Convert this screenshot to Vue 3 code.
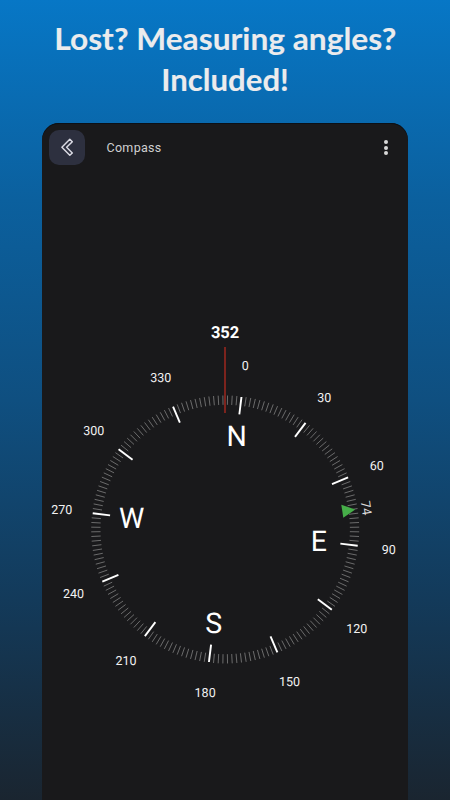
<script setup>
const CX = 183.2
const CY = 406.5
const ROTATION = 7

const polar = (deg, r) => {
  const a = ((deg + ROTATION) * Math.PI) / 180
  return { x: CX + r * Math.sin(a), y: CY - r * Math.cos(a) }
}

const ticks = Array.from({ length: 180 }, (_, i) => {
  const deg = i * 2
  const major = deg % 30 === 0
  const a = polar(deg, major ? 116 : 124.7)
  const b = polar(deg, major ? 133.5 : 134)
  return { deg, major, a, b }
})

const labels = Array.from({ length: 12 }, (_, i) => ({ text: String(i * 30), ...polar(i * 30, 164.7) }))
const letters = ['N', 'E', 'S', 'W'].map((text, i) => ({ text, ...polar(i * 90, 94.3) }))
</script>

<template>
  <main class="page">
    <svg class="headline" viewBox="0 0 450 123" width="450" height="123">
      <text x="54.3" y="50" textLength="342" lengthAdjust="spacingAndGlyphs">Lost? Measuring angles?</text>
      <text x="161.3" y="90.6" textLength="127.5" lengthAdjust="spacingAndGlyphs">Included!</text>
    </svg>
    <section class="phone">
      <header class="bar">
        <button class="back" aria-label="Back">
          <svg viewBox="0 0 36 35" width="36" height="35">
            <path d="M20.8 9.2 L12.9 17.3 L20.8 25.3 L23.3 23 L17.6 17.3 L23.3 11.7 Z" />
          </svg>
        </button>
        <span class="title">Compass</span>
        <span class="menu"><i></i><i></i><i></i></span>
      </header>
      <svg class="dial" viewBox="0 49 366 628" width="366" height="628">
        <line
          v-for="t in ticks" :key="t.deg" :class="t.major ? 'major' : 'minor'"
          :x1="t.a.x" :y1="t.a.y" :x2="t.b.x" :y2="t.b.y"
        />
        <text v-for="l in labels" :key="l.text" class="degree" :x="l.x" :y="l.y + 4.4">{{ l.text }}</text>
        <text v-for="l in letters" :key="l.text" class="letter" :x="l.x" :y="l.y + 10">{{ l.text }}</text>
        <line class="needle" x1="183" y1="224" x2="183" y2="290" />
        <text class="heading" x="183.1" y="215.2">352</text>
        <path class="marker" d="M299.3 381.7 L313.3 386.6 L301.3 394.7 Z" />
        <text class="bearing" transform="translate(324.2 385) rotate(82)" x="0" y="4.5">74</text>
      </svg>
    </section>
  </main>
</template>

<style>
body { margin: 0; }
</style>

<style scoped>
.page {
  width: 450px;
  height: 800px;
  overflow: hidden;
  display: flex;
  flex-direction: column;
  align-items: center;
  background: linear-gradient(180deg, #0777c6 0%, #0b609e 25%, #0f4f80 50%, #133a5a 75%, #1a2530 100%);
  font-family: Roboto, "Liberation Sans", sans-serif;
}
.headline {
  display: block;
  flex: none;
  font: 700 29.5px Lato, sans-serif;
  fill: #ebebed;
  stroke: #ebebed;
  stroke-width: 0.1;
  stroke-linejoin: round;
}
.phone {
  box-sizing: border-box;
  width: 366px;
  height: 677px;
  flex: none;
  border-radius: 17px 17px 0 0;
  background: #19191b;
  box-shadow: inset 0 1px 0 #0c1016;
  overflow: hidden;
}
.bar {
  box-sizing: border-box;
  height: 49px;
  display: flex;
  align-items: center;
  padding: 0 20px 0 7px;
}
.back {
  width: 36px;
  height: 35px;
  padding: 0;
  border: 0;
  border-radius: 10px;
  background: #2d303f;
}
.back svg { display: block; }
.back path {
  fill: none;
  stroke: #d9d9e2;
  stroke-width: 1.5;
  stroke-linejoin: round;
}
.title {
  margin-left: 21.5px;
  flex: 1;
  font-size: 12.5px;
  letter-spacing: 0.3px;
  color: #cfcfd0;
}
.menu { display: flex; flex-direction: column; gap: 1.6px; }
.menu i { width: 4px; height: 4px; border-radius: 50%; background: #d8d8d8; }
.dial { display: block; text-rendering: geometricPrecision; }
.minor { stroke: #808080; stroke-width: 0.8; }
.major { stroke: #fff; stroke-width: 1.9; }
.needle { stroke: #88251f; stroke-width: 1.8; }
.degree, .letter, .heading, .bearing { text-anchor: middle; fill: #f2f2f2; }
.degree { font-size: 12.5px; }
.letter { font-size: 28.5px; fill: #fff; }
.heading { font-size: 16.5px; font-weight: 700; fill: #fff; }
.bearing { font-size: 13px; fill: #d8d8d8; }
.marker { fill: #46ae49; }
</style>
